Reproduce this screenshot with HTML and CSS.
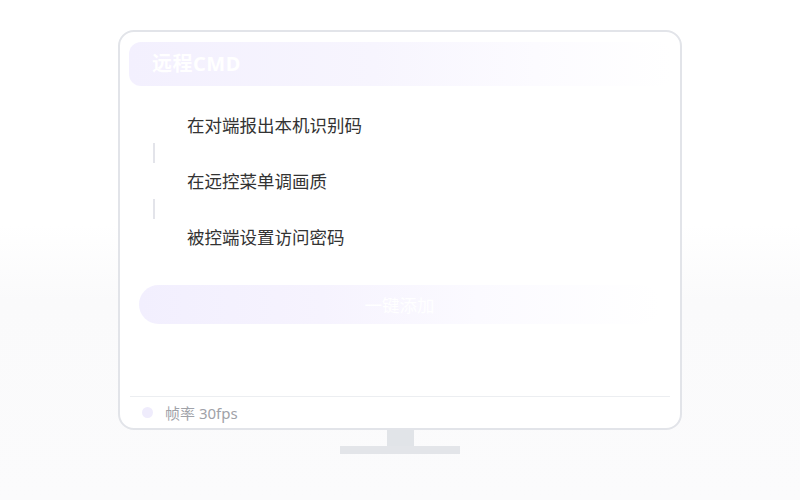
FILE: index.html
```html
<!DOCTYPE html>
<html lang="zh">
<head>
<meta charset="utf-8">
<title>远程CMD</title>
<link rel="stylesheet" href="styles.css">
</head>
<body>
<div class="stage">
  <div class="monitor">
    <div class="header"><span class="title">远程CMD</span></div>
    <div class="steps">
      <div class="step">在对端报出本机识别码</div>
      <div class="connector"></div>
      <div class="step">在远控菜单调画质</div>
      <div class="connector"></div>
      <div class="step">被控端设置访问密码</div>
    </div>
    <div class="action">一键添加</div>
    <div class="footer">
      <span class="dot"></span>
      <span class="fps">帧率 30fps</span>
    </div>
  </div>
  <div class="neck"></div>
  <div class="base"></div>
</div>
</body>
</html>
```

FILE: styles.css
```css
html, body {
  margin: 0;
  padding: 0;
  width: 800px;
  height: 500px;
  overflow: hidden;
  font-family: "Noto Sans", "Noto Sans CJK SC", sans-serif;
}

body {
  background: linear-gradient(180deg, #ffffff 0%, #ffffff 45%, #fafafb 60%, #fbfbfc 100%);
}

.stage {
  display: flex;
  flex-direction: column;
  align-items: center;
  padding-top: 30px;
}

.monitor {
  box-sizing: border-box;
  width: 564px;
  height: 400px;
  background: #ffffff;
  border: 2px solid #e2e4e9;
  border-radius: 16px;
  padding: 10px 9px 0 9px;
  display: flex;
  flex-direction: column;
}

.header {
  height: 44px;
  border-radius: 12px;
  background: linear-gradient(90deg, #f3f0fe 0%, #f7f5fe 45%, #fcfbff 75%, #ffffff 100%);
  display: flex;
  align-items: center;
  padding-left: 23px;
}

.title {
  color: #ffffff;
  font-size: 20px;
  font-weight: 700;
  letter-spacing: 0.5px;
  line-height: 1;
}

.steps {
  margin-top: 21px;
  padding-left: 24px;
  display: flex;
  flex-direction: column;
}

.step {
  height: 36px;
  line-height: 36px;
  padding-left: 34px;
  font-size: 17.5px;
  color: #333333;
}

.connector {
  width: 2px;
  height: 20px;
  background: #e3e4ea;
}

.action {
  margin: 30px 11px 0 10px;
  height: 39px;
  border-radius: 20px;
  background: linear-gradient(90deg, #f2effe 0%, #f6f3fe 35%, #fbfaff 65%, #ffffff 100%);
  color: #ffffff;
  font-size: 17.5px;
  display: flex;
  align-items: center;
  justify-content: center;
}

.footer {
  margin-top: auto;
  margin-left: 1px;
  margin-right: 1px;
  border-top: 1px solid #eceef1;
  height: 32px;
  display: flex;
  align-items: center;
  padding-left: 12px;
  box-sizing: border-box;
}

.dot {
  width: 11px;
  height: 11px;
  border-radius: 50%;
  background: #efecfc;
  margin-right: 12px;
}

.fps {
  font-size: 15px;
  color: #a0a2a8;
}

.neck {
  width: 27px;
  height: 16px;
  background: #e1e4e8;
}

.base {
  width: 120px;
  height: 8px;
  background: #e3e5e9;
}
```
